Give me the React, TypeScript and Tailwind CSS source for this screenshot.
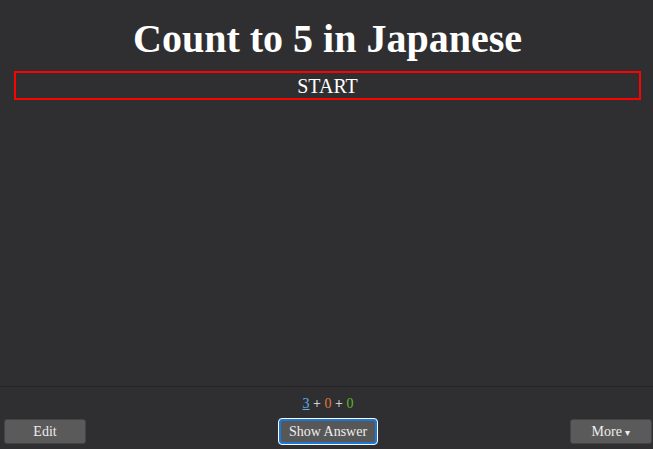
export default function App() {
  const serif = { fontFamily: '"Liberation Serif", "Times New Roman", serif' }
  return (
    <div className="flex h-[449px] w-[653px] flex-col overflow-hidden bg-[#2f2f31] text-white" style={serif}>
      <main className="flex-1 pl-[14px] pr-[12px] pt-[14px]">
        <h1 className="m-0 text-center text-[40px] font-bold leading-[50px] text-white">Count to 5 in Japanese</h1>
        <div className="mt-[7px] flex h-[29px] items-center justify-center border-2 border-[#ff0000] text-[20px] leading-none">
          START
        </div>
      </main>
      <footer className="flex h-[63px] flex-col border-t border-[#262628] pl-[4px] pr-[1px]">
        <div className="mt-[9px] text-center text-[14px] leading-[16px]">
          <span className="text-[#5ab0f0] underline">3</span>
          <span className="text-[#e8e8e8]"> + </span>
          <span className="text-[#e07a40]">0</span>
          <span className="text-[#e8e8e8]"> + </span>
          <span className="text-[#5cb82a]">0</span>
        </div>
        <div className="mt-[6px] grid grid-cols-[1fr_auto_1fr] items-center">
          <button className="h-[25px] w-[82px] justify-self-start rounded-[3px] border border-[#444] bg-[#5a5a5a] text-[14px] text-[#eee]">
            Edit
          </button>
          <button className="h-[27px] w-[100px] rounded-[4px] border border-white bg-[#1c78d6] p-[2px] text-[14px] text-[#eee]">
            <span className="flex h-full w-full items-center justify-center rounded-[2px] bg-[#575757]">Show Answer</span>
          </button>
          <button className="h-[25px] w-[82px] justify-self-end rounded-[3px] border border-[#444] bg-[#5a5a5a] text-[14px] text-[#eee]">
            More <span className="text-[10px]">▾</span>
          </button>
        </div>
      </footer>
    </div>
  )
}
